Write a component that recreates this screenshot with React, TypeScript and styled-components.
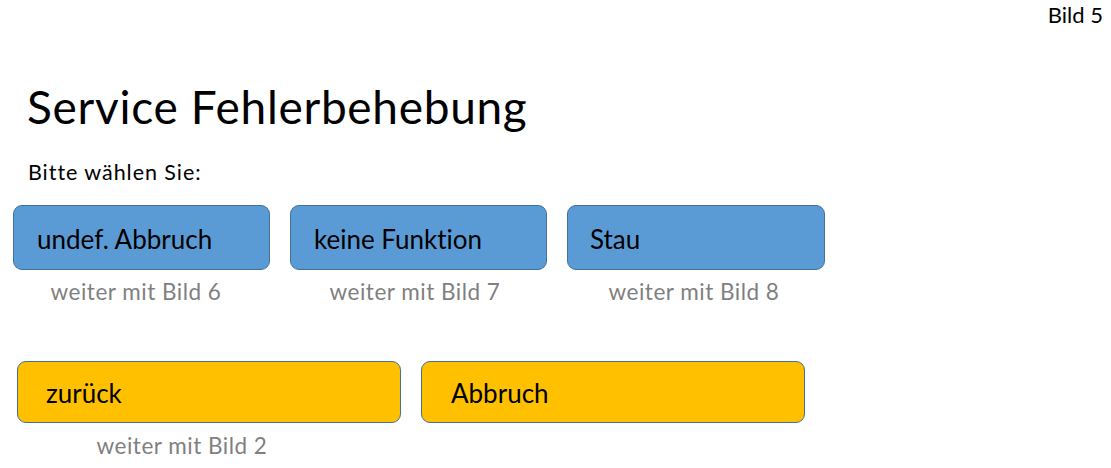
import React from "react";
import styled, { createGlobalStyle } from "styled-components";

const Global = createGlobalStyle`
  html, body { margin: 0; padding: 0; background: #ffffff; }
  body {
    font-family: Lato, "Open Sans", sans-serif;
    color: #000;
    font-variant-ligatures: none;
    font-feature-settings: "liga" 0, "clig" 0;
  }
`;

const Page = styled.div`
  width: 1111px;
  height: 468px;
  box-sizing: border-box;
  display: flex;
  flex-direction: column;
  overflow: hidden;
`;

const TopBar = styled.div`
  display: flex;
  justify-content: flex-end;
  padding: 2px 8px 0 0;
  font-size: 22px;
  line-height: 26px;
`;

const Title = styled.h1`
  margin: 51px 0 0 27px;
  font-weight: 400;
  font-size: 46px;
  line-height: 56px;
  letter-spacing: 0.7px;
`;

const Subtitle = styled.div`
  margin: 24px 0 0 28px;
  font-size: 21.5px;
  line-height: 26px;
  letter-spacing: 0.95px;
`;

const Row = styled.div<{ $left: number; $top: number }>`
  display: flex;
  gap: 20px;
  margin: ${(p) => p.$top}px 0 0 ${(p) => p.$left}px;
`;

const Option = styled.div<{ $width: number }>`
  display: flex;
  flex-direction: column;
  width: ${(p) => p.$width}px;
`;

const Button = styled.div<{ $kind: "blue" | "yellow"; $height: number; $pad: number; $nudge: number }>`
  box-sizing: border-box;
  height: ${(p) => p.$height}px;
  border-radius: 9px;
  border: 1px solid #41719c;
  background: ${(p) => (p.$kind === "blue" ? "#5b9bd5" : "#ffc000")};
  display: flex;
  align-items: center;
  padding: ${(p) => p.$nudge}px 0 0 ${(p) => p.$pad}px;
  font-size: 26px;
  color: #000;
`;

const Caption = styled.div<{ $shift: number; $gap: number }>`
  margin-top: ${(p) => p.$gap}px;
  padding-right: ${(p) => p.$shift}px;
  text-align: center;
  color: #7f7f7f;
  font-size: 22.5px;
  line-height: 26px;
  letter-spacing: 0.5px;
  white-space: nowrap;
`;

export default function App() {
  return (
    <Page>
      <Global />
      <TopBar>Bild 5</TopBar>
      <Title>Service Fehlerbehebung</Title>
      <Subtitle>Bitte wählen Sie:</Subtitle>
      <Row $left={13} $top={20}>
        <Option $width={257}>
          <Button $kind="blue" $height={65} $pad={23} $nudge={3}>undef. Abbruch</Button>
          <Caption $shift={11} $gap={9}>weiter mit Bild 6</Caption>
        </Option>
        <Option $width={257}>
          <Button $kind="blue" $height={65} $pad={23} $nudge={3}>keine Funktion</Button>
          <Caption $shift={7} $gap={9}>weiter mit Bild 7</Caption>
        </Option>
        <Option $width={258}>
          <Button $kind="blue" $height={65} $pad={22} $nudge={3}>Stau</Button>
          <Caption $shift={4} $gap={9}>weiter mit Bild 8</Caption>
        </Option>
      </Row>
      <Row $left={17} $top={56}>
        <Option $width={384}>
          <Button $kind="yellow" $height={62} $pad={28} $nudge={2}>zurück</Button>
          <Caption $shift={54} $gap={10}>weiter mit Bild 2</Caption>
        </Option>
        <Option $width={384}>
          <Button $kind="yellow" $height={62} $pad={29} $nudge={2}>Abbruch</Button>
        </Option>
      </Row>
    </Page>
  );
}
